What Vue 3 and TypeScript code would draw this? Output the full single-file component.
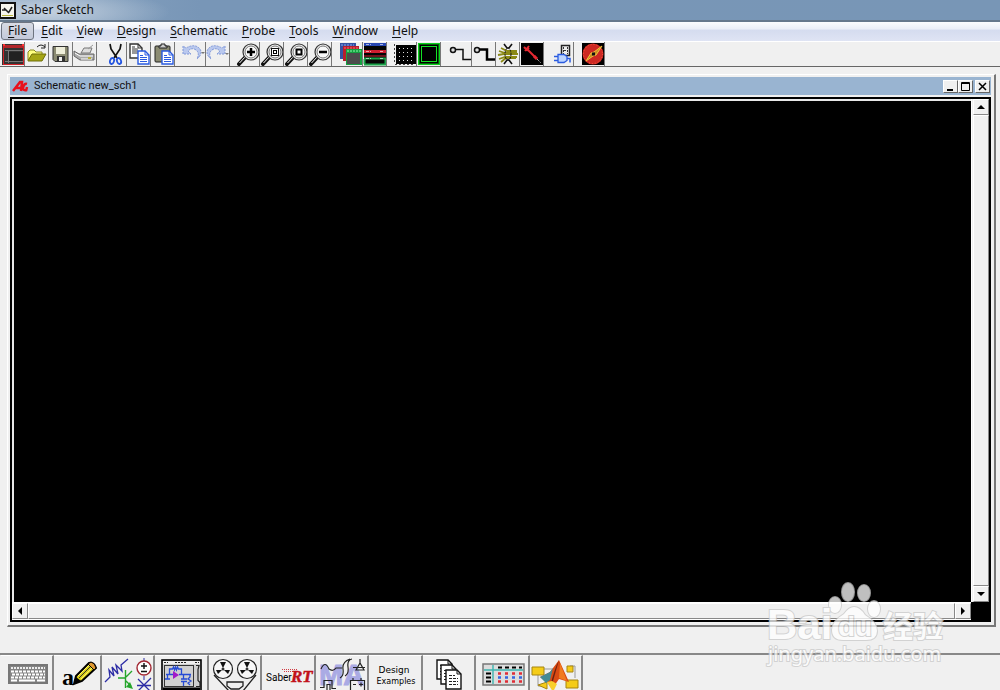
<script setup lang="ts">
import { ref } from 'vue'

interface MenuEntry { key: string; rest: string }
interface Tool { name: string; art: string }

const menus: MenuEntry[] = [
  { key: 'F', rest: 'ile' },
  { key: 'E', rest: 'dit' },
  { key: 'V', rest: 'iew' },
  { key: 'D', rest: 'esign' },
  { key: 'S', rest: 'chematic' },
  { key: 'P', rest: 'robe' },
  { key: 'T', rest: 'ools' },
  { key: 'W', rest: 'indow' },
  { key: 'H', rest: 'elp' },
]
const activeMenu = ref('F')

const lens = (inner: string): string => `<g transform="translate(1 1)">
  <path d="M2 21 L9 13.500" stroke="#111" stroke-width="4" stroke-linecap="round"/>
  <path d="M2.500 20 L9 13" stroke="#fff" stroke-width="1"/>
  <circle cx="14" cy="9" r="8" fill="#eee" stroke="#333" stroke-width="1.200"/>
  <circle cx="14" cy="9" r="6" fill="#f8f8f8" stroke="#777"/>
  ${inner}</g>`
const pages = `
  <path d="M11 9 h7 l4 4 v9 h-11 z" fill="#fff" stroke="#2a5be0" stroke-width="1.400"/>
  <path d="M18 9 v4 h4 M13 13.500 h3 M13 15.500 h7 M13 17.500 h7 M13 19.500 h7" stroke="#2a5be0" fill="none"/>`

const toolGroups: Tool[][] = [
  [
    { name: 'New schematic', art: `<rect x="1" y="2" width="22" height="21" fill="#333"/><rect x="2" y="3" width="20" height="3" fill="#b3262b"/><path d="M2.500 4v19M22.500 4v19M2 22.500h21" stroke="#d22027"/><path d="M4 8h18v1H4zM7 9h1v12H7zM4 19h18v1H4z" fill="#777"/><rect x="8" y="10" width="13" height="9" fill="#222"/><rect x="2" y="2" width="2" height="2" fill="#f33"/><rect x="21" y="2" width="2" height="2" fill="#f33"/>` },
    { name: 'Open', art: `<path d="M3 18V10l2-2h4l2 2h6v3" fill="#ffff80" stroke="#8a8a20"/><path d="M3 18.500L7 12h14l-4 7H3z" fill="#a5a515" stroke="#6e6e08"/><path d="M12 5q4-4 8 0M20 2v4h-4" fill="none" stroke="#222"/>` },
    { name: 'Save', art: `<path d="M4 4.500h15v15H6l-2-2z" fill="#8b8b72" stroke="#333"/><rect x="7" y="5" width="9" height="7" fill="#eeeeda"/><rect x="8" y="14" width="8" height="5" fill="#333"/><rect x="10" y="15" width="3" height="4" fill="#eee"/>` },
    { name: 'Print', art: `<path d="M1 9l5 3h15v6H7l-6-4z" fill="#aaa" stroke="#666"/><path d="M8 11l3-5h8l-2 5z" fill="#ddd" stroke="#777"/><path d="M2 11l5 3h13M8 17h11" fill="none" stroke="#fff"/><path d="M15 7l5-4" stroke="#999"/><rect x="15" y="15" width="3" height="2" fill="#b8ae3a"/>` },
  ],
  [
    { name: 'Cut', art: `<path d="M7 2l1 5 6 9M18 2l-1 5-6 9" fill="none" stroke="#111" stroke-width="1.700"/><ellipse cx="9" cy="19" rx="2" ry="3" fill="none" stroke="#2455e0" stroke-width="1.800" transform="rotate(20 9 19)"/><ellipse cx="16" cy="19" rx="2" ry="3" fill="none" stroke="#2455e0" stroke-width="1.800" transform="rotate(-20 16 19)"/>` },
    { name: 'Copy', art: `<path d="M3 2h8l4 4v10H3z" fill="#fff" stroke="#333" stroke-width="1.400"/><path d="M5 5h3M5 7h6M5 9h6M5 11h6M11 2v4h4" fill="none" stroke="#333"/>${pages}` },
    { name: 'Paste', art: `<rect x="4" y="4" width="15" height="16" rx="1" fill="#8b8b72" stroke="#222"/><path d="M8 6V4h2V2h4v2h2v2z" fill="#ccc" stroke="#222"/>${pages}` },
  ],
  [
    { name: 'Undo', art: `<path d="M1 4v8h8l-3-3q4-4 8-1 4 3 1 9 6-5 3-10-5-6-14-1z" fill="#b9c8ee"/><path d="M1 4v8h8l-3-3q4-4 8-1 4 3 1 9 6-5 3-10-5-6-14-1z" fill="none" stroke="#7f97d8" stroke-dasharray="2 1"/><path d="M19 10h4l-2 2z" fill="#777"/>` },
    { name: 'Redo', art: `<path d="M19 4v8h-8l3-3q-4-4-8-1-4 3-1 9-6-5-3-10 5-6 14-1z" fill="#b9c8ee"/><path d="M19 4v8h-8l3-3q-4-4-8-1-4 3-1 9-6-5-3-10 5-6 14-1z" fill="none" stroke="#7f97d8" stroke-dasharray="2 1"/><path d="M19 11h4l-2 2z" fill="#777"/>` },
  ],
  [
    { name: 'Zoom in', art: lens('<path d="M14 5v8M10 9h8" stroke="#000" stroke-width="2.500"/>') },
    { name: 'Zoom to fit', art: lens('<rect x="10.500" y="5.500" width="7" height="7" fill="#fff" stroke="#111"/><rect x="12.500" y="7.500" width="3" height="3" fill="none" stroke="#000"/>') },
    { name: 'Zoom area', art: lens('<rect x="11.500" y="6.500" width="5" height="5" fill="#fff" stroke="#000" stroke-width="2"/>') },
    { name: 'Zoom out', art: lens('<path d="M10 9h8" stroke="#000" stroke-width="2.500"/>') },
  ],
  [
    { name: 'Cascade', art: `<rect x="1" y="1" width="16" height="16" fill="#3451a4"/><path d="M2 3h13" stroke="#93a7ed" stroke-dasharray="2 1"/><rect x="4" y="4" width="16" height="15" fill="#b71f2d"/><path d="M5 6h14" stroke="#ff6670" stroke-dasharray="2 1"/><rect x="7" y="7" width="16" height="16" fill="#15a040"/><path d="M8 9h14" stroke="#8dffaa" stroke-dasharray="2 1"/><rect x="8" y="11" width="13" height="11" fill="#4c4c4c"/>` },
    { name: 'Tile', art: `<rect x="1" y="1" width="22" height="22" fill="#050505"/><path d="M1 2.500h22" stroke="#2847b3" stroke-width="3"/><path d="M1 9.500h22" stroke="#cf1e30" stroke-width="3"/><path d="M1 16.500h22M1 22.500h22M1.500 17v5M22.500 17v5" stroke="#19a348" stroke-width="2"/><path d="M1 14h22" stroke="#cf1e30"/><path d="M3 2.500h5M17 2.500h3M3 9.500h5M17 9.500h3M3 16.500h5M17 16.500h3" stroke="#fff" stroke-dasharray="3 1" opacity=".6"/>` },
  ],
  [
    { name: 'Grid', art: `<rect x="3" y="3" width="20" height="19"/><path d="M6 6.500h16M6 10.500h16M6 14.500h16M6 18.500h16" stroke="#ddd" stroke-dasharray="1 3"/><path d="M1.500 2v20M2 22.500h20" stroke="#444" stroke-dasharray="2 2"/>` },
    { name: 'Background', art: `<rect x="1" y="1" width="22" height="22" fill="#0cd11c"/><rect x="2.500" y="2.500" width="19" height="19" fill="#000" stroke="#075d0d"/><rect x="4.500" y="4.500" width="15" height="15" fill="#000" stroke="#13e124"/>` },
  ],
  [
    { name: 'Draw wire', art: `<circle cx="5" cy="8" r="2.500" fill="#ddd" stroke="#111" stroke-width="1.500"/><path d="M7 7.500h8v10h9" fill="none" stroke="#111" stroke-width="1.500"/>` },
    { name: 'Draw bus', art: `<circle cx="5" cy="8" r="2.500" fill="#ddd" stroke="#111" stroke-width="1.500"/><path d="M7 7.500h8v10h9" fill="none" stroke="#000" stroke-width="2.500"/>` },
    { name: 'Bundle', art: `<path d="M3 9l6 2h12M2 13l6-1h14M3 17l6-2h12M5 20l5-4h10M5 6l6 3h10" fill="none" stroke="#8c8a17" stroke-width="1.800"/><path d="M8 2l3 4h2l3-4M8 22l3-4h2l3 4" fill="none" stroke="#111" stroke-width="1.600"/><ellipse cx="12" cy="12" rx="3" ry="6" fill="none" stroke="#111" stroke-dasharray="2 1"/>` },
    { name: 'Probe', art: `<rect x="1" y="1" width="22" height="22"/><path d="M4 5l3 3 2-2M5 9l4-5M7 7l8 8" fill="none" stroke="#e52932" stroke-width="2"/><path d="M14 14l3 3" stroke="#e52932" stroke-width="3"/><path d="M17 17l4 4" stroke="#eee" stroke-dasharray="1 1"/>` },
  ],
  [
    { name: 'Netlist', art: `<rect x="11.500" y="3.500" width="8" height="10" fill="#eee" stroke="#222" stroke-width="1.500"/><path d="M13.500 5v7M17.500 5v7M14 8.500h3" stroke="#333" stroke-dasharray="2 1" fill="none"/><path d="M4 14.500h4M4 18.500h4M17 16.500h3v4" stroke="#2a5be0" stroke-width="1.500" fill="none"/><path d="M8 12.500h6l3 2v4l-3 2H8z" fill="#bcd4ff" stroke="#2a5be0" stroke-width="1.300"/>` },
  ],
  [
    { name: 'Simulate', art: `<rect x="1" y="1" width="22" height="22"/><circle cx="12" cy="12" r="10.500" fill="#cd2923"/><circle cx="12" cy="12" r="9.500" fill="none" stroke="#ff5b42" stroke-dasharray="1 2"/><path d="M5 19l5-8 3-1 8-6-6 9-3 1z" fill="#c98b24" stroke="#f2c43c"/><path d="M11 12h3" stroke="#111" stroke-width="3"/>` },
  ],
]

const fan = (cx: number): string => `
  <circle cx="${cx}" cy="13" r="9.500" fill="#f7f7f7" stroke="#222" stroke-width="1.200"/>
  <path d="M${cx} 12l-3-6h6zM${cx - 1} 14l-6 0 2 4zM${cx + 1} 14l6 0-2 4z" fill="#111"/>
  <circle cx="${cx}" cy="13" r="1.500" fill="#333"/>`
const sheet = (x: number, y: number): string => `
  <path d="M${x} ${y}h11l4 4v15h-15z" fill="#fff" stroke="#111" stroke-width="1.400"/>
  <path d="M${x + 11} ${y}v4h4" fill="none" stroke="#111"/>
  <path d="M${x + 3} ${y + 5.5}h6M${x + 3} ${y + 8.5}h9M${x + 3} ${y + 11.5}h9M${x + 3} ${y + 14.5}h9" stroke="#222" stroke-dasharray="3 1"/>`

const launchers: Tool[] = [
  { name: 'Keyboard', art: `<rect x="7" y="8" width="40" height="20" fill="#777"/><rect x="9" y="10" width="36" height="16" fill="#858585"/><path d="M10 12h34" stroke="#eee" stroke-width="2" stroke-dasharray="2 1"/><path d="M10 15.500h34M11 18.500h33M10 21.500h34" stroke="#fff" stroke-width="2" stroke-dasharray="3 1"/><path d="M10 24.500h6M18 24.500h16M36 24.500h8" stroke="#fff" stroke-width="2"/>` },
  { name: 'Annotate', art: `<text x="8" y="29" font-family="Liberation Serif, serif" font-size="24" font-weight="700">a</text><path d="M20 28l2-8L35 7q5-1 7 5L28 25z" fill="#d9cf19" stroke="#000" stroke-width="2"/><path d="M24 20L35 9M27 23l11-11" stroke="#fff36a"/><path d="M25 22l11-11" stroke="#333"/><path d="M20 28l2-7 5 4z"/><path d="M34 8l6 6 2-2q-1-5-5-6z" fill="#df9731" stroke="#000"/>` },
  { name: 'Parts gallery', art: `<path d="M3 26l5-5-1-7 5 6-2-9 6 7-2-9 6 6-1-6 7-6" fill="none" stroke="#2c2ca5" stroke-width="1.300"/><path d="M16 22h7M23.500 14v18M24 21l6-6M24 25l5 5" fill="none" stroke="#25a52b" stroke-width="1.400"/><path d="M31 33l-7-2 4-5z" fill="#25a52b"/><path d="M42 2v3M42 20v4" stroke="#2c2ca5"/><circle cx="42" cy="12" r="7" fill="#fff" stroke="#a22631" stroke-width="1.400"/><path d="M42 7v6M39 10h6M39 15.500h6" stroke="#111" stroke-width="1.400"/><path d="M36 23l13 13M49 22L35 36M35 29.500h14" stroke="#2c2ca5" stroke-width="1.300"/>` },
  { name: 'Scope', art: `<rect x="7" y="4" width="39" height="31" fill="#cfcfcf" stroke="#000" stroke-width="1.600"/><path d="M8 6.500h37" stroke="#eee" stroke-width="3"/><path d="M9 6.500h4M20 6.500h12M40 6.500h4" stroke="#222" stroke-dasharray="2 1"/><rect x="9.500" y="9.500" width="29" height="21" fill="#d0d0d0" stroke="#333"/><path d="M41 9.500h3l-1 4v11l2 2v4h-4" fill="none" stroke="#222" stroke-width="1.200"/><path d="M11 18.500h7M24 18.500h12M14.500 18v-5h3l1-2 1 3 1-3 1 3 1-3 1 2h3v5" fill="none" stroke="#264bd5" stroke-width="1.300"/><path d="M12.500 19v4M10 23h5M28.500 19v4M26 23h6M26 25.500h6M28.500 26v4M35 19v2l-2 2 3 2-3 2 2 2" fill="none" stroke="#264bd5" stroke-width="1.300"/><path d="M18 15l6 4-6 4z" fill="#a31bc8"/><path d="M8 33h37" stroke="#000" stroke-width="3"/>` },
  { name: 'Recorder', art: `${fan(14)}${fan(38)}<path d="M5 19l15 16h14l13-16M18 26h16v4l-4 3h-8l-4-3z" fill="none" stroke="#222" stroke-width="1.300"/>` },
  { name: 'Saber RT', art: `<text x="4" y="25" font-family="Roboto, sans-serif" font-size="10">Saber</text><path d="M20 13.500h15M22 15.500h12" stroke="#d23b42" stroke-dasharray="1 1"/><text x="29" y="26" font-family="Liberation Serif, serif" font-size="17" font-weight="700" font-style="italic" fill="#c11119" stroke="#c11119" stroke-width=".5">RT</text>` },
  { name: 'MAST models', art: `<text x="3" y="29" font-family="Liberation Sans, sans-serif" font-size="29" font-weight="700" fill="#aaaae4" stroke="#aaaae4">MA</text><path d="M5 13q4-9 8 0 4 3 7-1h6M4 31.500h4v-7h8v8h4M6 34.500h5v-6h3v6M24 22q4-2 3-9t7-10M29 20q4-2 3-9t4-8M37 11.500h12M40 14l4-7 4 7zM44 3v4M34.500 24.500h14v10h-14zM37 24v-2M45 24v-2M37 28.500h3M43 28.500h4M45 26.500v4" fill="none" stroke="#222" stroke-width="1.200"/>` },
  { name: 'Design Examples', art: `<text x="25" y="17" text-anchor="middle" font-family="DejaVu Sans, sans-serif" font-size="9">Design</text><text x="27" y="28" text-anchor="middle" font-family="DejaVu Sans, sans-serif" font-size="8">Examples</text>` },
  { name: 'Documents', art: `${sheet(14, 4)}${sheet(18, 9)}${sheet(23, 14)}` },
  { name: 'Report', art: `<rect x="7" y="8" width="41" height="21" fill="#ddd" stroke="#777" stroke-width="1.500"/><path d="M8 14h39M17 9v19" stroke="#3cb5b0" stroke-width="1.400"/><path d="M22 11.500h24" stroke="#000" stroke-width="2" stroke-dasharray="4 3"/><path d="M10 17.500h5M10 21.500h5M10 25.500h5" stroke="#000" stroke-width="2"/><path d="M22 17.500h24M22 25.500h24" stroke="#e02c36" stroke-width="2.500" stroke-dasharray="3 4"/><path d="M22 21.500h24" stroke="#3665e0" stroke-width="2.500" stroke-dasharray="3 4"/>` },
  { name: 'Simulink', art: `<path d="M8 18v12h6M14 13h10M40 10h5v12" fill="none" stroke="#999"/><path d="M2 11h12v8H2zM37 10h6v6h-6zM36 24h12v8H36zM8 29l9-3v7z" fill="#f5cc18" stroke="#a68510"/><path d="M10 21l10-5 9-12 10 22-10-3-7 10-5-7z" fill="#d94a13"/><path d="M10 21l10-5 3-4-3 12-4 3z" fill="#458b94"/><path d="M29 4l-6 21-3 6q4-17 9-27z" fill="#6c2010"/><path d="M30 7l7 18-8-3z" fill="#f17a1e"/><path d="M17 26l5-1 5 3-4 8z" fill="#f9cf2b"/>` },
]
</script>

<template>
  <div class="app">
    <header class="titlebar">
      <svg class="app-icon" viewBox="0 0 16 17" aria-hidden="true">
        <rect width="16" height="17" fill="#111" /><rect x="1" y="2" width="13" height="13" fill="#f6f6ee" />
        <path d="M2 8h4l3 3M6 8l-2-2M9 10l3-5" fill="none" stroke="#222" stroke-width="1.500" />
        <path d="M2 13.500h11" stroke="#b9b53c" />
      </svg>
      <h1>Saber Sketch</h1>
    </header>

    <nav class="menubar" aria-label="Main menu">
      <button
        v-for="menu in menus"
        :key="menu.key"
        type="button"
        :class="{ active: menu.key === activeMenu }"
        @click="activeMenu = menu.key"
      ><u>{{ menu.key }}</u>{{ menu.rest }}</button>
    </nav>

    <div class="toolbar" role="toolbar" aria-label="Tools">
      <div v-for="(group, index) in toolGroups" :key="index" class="tool-group">
        <button v-for="tool in group" :key="tool.name" type="button" :aria-label="tool.name">
          <svg viewBox="0 0 24 24" fill="#000" aria-hidden="true" v-html="tool.art"></svg>
        </button>
      </div>
    </div>

    <main class="workspace">
      <section class="child-window" aria-label="Schematic new_sch1">
        <div class="child-title">
          <svg class="child-icon" viewBox="0 0 17 12" aria-hidden="true">
            <path d="M1 11L8 2h2l-1 9M4 8h6M15 4q-3-1-4 4 0 3 4 2M15 7l-1 4" fill="none" stroke="#e8101c" stroke-width="2.500" />
          </svg>
          <h2>Schematic new_sch1</h2>
          <div class="controls">
            <button type="button" aria-label="Minimize"><svg viewBox="0 0 13 11"><path d="M3 9h6" stroke="#000" stroke-width="2" /></svg></button>
            <button type="button" aria-label="Maximize"><svg viewBox="0 0 13 11"><path d="M2.500 1.500h8v8h-8zM2 2.500h9" fill="none" stroke="#000" /></svg></button>
            <button type="button" class="close" aria-label="Close"><svg viewBox="0 0 13 11"><path d="M3 2l7 7M10 2L3 9" stroke="#000" stroke-width="1.500" /></svg></button>
          </div>
        </div>
        <div class="sheet">
          <div class="canvas"></div>
          <div class="scroll vertical">
            <button type="button" aria-label="Scroll up"><svg viewBox="0 0 8 8"><path d="M0 6h8L4 2z" /></svg></button>
            <div class="thumb"></div>
            <button type="button" aria-label="Scroll down"><svg viewBox="0 0 8 8"><path d="M0 2h8L4 6z" /></svg></button>
          </div>
          <div class="scroll horizontal">
            <button type="button" aria-label="Scroll left"><svg viewBox="0 0 8 8"><path d="M6 0v8L2 4z" /></svg></button>
            <div class="thumb"></div>
            <button type="button" aria-label="Scroll right"><svg viewBox="0 0 8 8"><path d="M2 0v8l4-4z" /></svg></button>
          </div>
        </div>
      </section>
    </main>

    <footer class="dock">
      <button v-for="item in launchers" :key="item.name" type="button" :aria-label="item.name">
        <svg viewBox="0 0 53 36" fill="#000" aria-hidden="true" v-html="item.art"></svg>
      </button>
    </footer>

    <svg class="watermark" viewBox="0 0 190 90" aria-label="Baidu 经验">
      <g class="mark">
        <ellipse cx="88" cy="12" rx="6" ry="9" />
        <ellipse cx="104" cy="13" rx="6" ry="8" />
        <ellipse cx="75" cy="25" rx="6" ry="8" />
        <ellipse cx="114" cy="29" rx="6" ry="8" />
        <path d="M94 27q6 0 11 8 12 7 12 16 0 9-11 9H83q-11 0-11-10 0-9 12-16 5-7 10-7z" />
        <text class="brand" x="7" y="59">Bai</text>
        <text class="cjk" x="123" y="57">经验</text>
        <text class="address" x="8" y="81">jingyan.baidu.com</text>
        <text class="du" x="78" y="56">du</text>
      </g>
    </svg>
  </div>
</template>

<style>
html, body { margin: 0; overflow: hidden; }
</style>

<style scoped>
.app {
  position: relative;
  display: flex;
  flex-direction: column;
  height: 100vh;
  overflow: hidden;
  background: #f0f0f0;
  font-family: "Noto Sans", sans-serif;
  color: #111;
}
.app *, .app *::before { box-sizing: border-box; }
button { margin: 0; padding: 0; border: 0; background: #f0f0f0; font: inherit; color: inherit; }
svg { display: block; }
h1, h2 { margin: 0; font-weight: 400; }

.titlebar {
  display: flex;
  align-items: center;
  gap: 5px;
  flex: none;
  height: 22px;
  border-bottom: 2px solid #66788c;
  background:
    radial-gradient(ellipse 130px 24px at 40px 12px, rgba(205, 216, 228, .9), rgba(205, 216, 228, 0)),
    linear-gradient(90deg, #8ba6c2, #7896b7 20%, #7896b6);
}
.app-icon { width: 16px; height: 17px; }
.titlebar h1 { font-size: 12px; line-height: 20px; }

.menubar {
  display: flex;
  flex: none;
  height: 19px;
  padding-left: 1px;
  background: linear-gradient(#fbfcfe, #eceff8 35%, #d5dcef 45%, #dfe4f4);
}
.menubar button {
  height: 18px;
  padding: 0 6px;
  border: 1px solid transparent;
  border-radius: 3px;
  background: none;
  font-size: 12px;
  line-height: 16px;
}
.menubar button.active { border-color: #6e7480; background: linear-gradient(#d8dbe4, #c3c9da); }
.menubar u { text-underline-offset: 2px; }

.toolbar {
  display: flex;
  flex: none;
  height: 26px;
  padding-left: 1px;
  border-top: 1px solid #fff;
  border-bottom: 1px solid #666;
}
.tool-group { display: flex; }
.tool-group:nth-child(even) { margin-left: 6px; }
.tool-group:nth-child(odd):not(:first-child) { margin-left: 7px; }
.tool-group button {
  width: 24px;
  height: 24px;
  overflow: hidden;
  border-right: 1px solid #777;
}
.tool-group svg { width: 24px; height: 24px; }

.workspace { display: flex; flex: 1; min-height: 0; padding: 7px 4px 26px 7px; }
.child-window {
  display: flex;
  flex: 1;
  flex-direction: column;
  min-width: 0;
  padding: 2px 3px 3px 2px;
  border: solid;
  border-width: 1px 2px 2px 1px;
  border-color: #fff #777 #777 #fff;
}
.child-title {
  display: flex;
  align-items: center;
  flex: none;
  height: 18px;
  padding: 0 1px 0 2px;
  background: #99b4d1;
}
.child-icon { width: 17px; height: 12px; }
.child-title h2 { flex: 1; padding-left: 5px; font: 11px/18px Roboto, sans-serif; }
.controls { display: flex; }
.controls button {
  width: 15px;
  height: 13px;
  border: 1px solid;
  border-color: #fff #666 #666 #fff;
}
.controls .close { margin-left: 2px; }
.controls svg { width: 13px; height: 11px; }

.sheet {
  display: grid;
  grid-template: minmax(0, 1fr) 18px / minmax(0, 1fr) 18px;
  flex: 1;
  min-height: 0;
  margin-top: 2px;
  border: 2px solid #000;
  background: #000;
  box-shadow: inset 2px 2px #e8e8e8;
}
.canvas { margin: 2px 0 0 2px; background: #000; }
.scroll { display: flex; background: #f0f0f0; }
.scroll button {
  display: grid;
  place-items: center;
  flex: none;
  width: 16px;
  height: 16px;
  border: 1px solid;
  border-color: #fff #888 #888 #fff;
}
.scroll svg { width: 8px; height: 8px; }
.thumb { flex: 1; border: 1px solid; border-color: #fff #888 #888 #fff; }
.vertical { flex-direction: column; padding-left: 1px; border-left: 1px solid #fff; }
.vertical button { width: 16px; }
.horizontal { border-top: 1px solid #fff; border-bottom: 1px solid #fff; }

.dock {
  display: flex;
  flex: none;
  height: 37px;
  padding-left: 1px;
  overflow: hidden;
  border-top: 2px solid #888;
}
.dock button {
  flex: none;
  width: 53px;
  height: 36px;
  overflow: hidden;
  border-top: 1px solid #fff;
  border-right: 2px solid #888;
}
.dock button:nth-child(even) { width: 54px; }
.dock button:nth-child(2) { width: 48px; }
.dock svg { width: 53px; height: 36px; }

.watermark {
  position: absolute;
  right: 50px;
  bottom: 20px;
  width: 190px;
  height: 90px;
  pointer-events: none;
}
.mark { fill: #fff; stroke: #c8c8c8; stroke-width: 2px; paint-order: stroke; opacity: .75; }
.brand { font: 700 42px "Liberation Sans", sans-serif; }
.cjk { font: 700 30px "Noto Sans CJK SC", sans-serif; }
.address { font: 20px "Noto Sans", sans-serif; }
.du { font: 700 28px "Liberation Sans", sans-serif; }
</style>
